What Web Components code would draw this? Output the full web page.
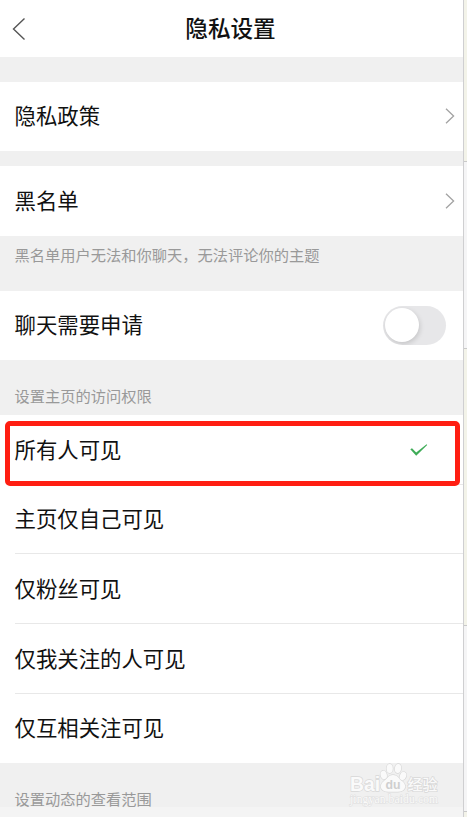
<!DOCTYPE html>
<html lang="zh-CN">
<head>
<meta charset="utf-8">
<title>隐私设置</title>
<style>
  body {
    margin: 0;
    background: #f4f4f4;
    font-family: "Noto Sans CJK SC", sans-serif;
    color: #111;
  }
</style>
</head>
<body>
<privacy-page>
  <nav-header>隐私设置</nav-header>
  <section-gap style="--height: 25px"></section-gap>
  <setting-row style="--height: 69px">隐私政策<arrow-icon slot="end"></arrow-icon></setting-row>
  <section-gap style="--height: 15px"></section-gap>
  <setting-row style="--height: 70px">黑名单<arrow-icon slot="end"></arrow-icon></setting-row>
  <section-gap style="--height: 55px; --top: 7px">黑名单用户无法和你聊天，无法评论你的主题</section-gap>
  <setting-row style="--height: 69px; --end: 17px">聊天需要申请<toggle-switch slot="end"></toggle-switch></setting-row>
  <section-gap style="--height: 55px; --top: 24px">设置主页的访问权限</section-gap>
  <option-list>
    <setting-row line style="--height: 70px; --end: 35px">所有人可见<check-icon slot="end"></check-icon></setting-row>
    <setting-row line style="--height: 69px">主页仅自己可见</setting-row>
    <setting-row line>仅粉丝可见</setting-row>
    <setting-row line>仅我关注的人可见</setting-row>
    <setting-row style="--height: 69px">仅互相关注可见</setting-row>
  </option-list>
  <section-gap style="--height: 44px; --top: 24px">设置动态的查看范围</section-gap>
  <side-strip slot="side"></side-strip>
  <water-mark slot="mark"></water-mark>
</privacy-page>

<script>
class PrivacyPage extends HTMLElement {
  constructor() {
    super();
    this.attachShadow({ mode: "open" });
    this.shadowRoot.innerHTML = /*html*/ `
            <style>
            :host {
              display: flex;
              position: relative;
              width: 467px;
              height: 817px;
              overflow: hidden;
            }

            main {
              flex: 1;
              min-width: 0;
            }
            </style>

            <main><slot></slot></main>
            <slot name="side"></slot>
            <slot name="mark"></slot>
        `;
  }
}

class NavHeader extends HTMLElement {
  constructor() {
    super();
    this.attachShadow({ mode: "open" });
    this.shadowRoot.innerHTML = /*html*/ `
            <style>
            :host {
              display: grid;
              grid-template-columns: 40px 1fr 42px;
              align-items: center;
              height: 57px;
              background: #fff;
              font-size: 22.6px;
              font-weight: 500;
              line-height: 55px;
              text-align: center;
            }

            svg {
              display: block;
              margin-left: 11px;
            }

            span {
              padding-bottom: 2px;
            }
            </style>

            <svg width="16" height="24" viewBox="0 0 16 24">
              <path d="M13.5 1.5 2.5 12l11 10.5" fill="none" stroke="#555" stroke-width="1.4" />
            </svg>
            <span><slot></slot></span>
        `;
  }
}

class SectionGap extends HTMLElement {
  constructor() {
    super();
    this.attachShadow({ mode: "open" });
    this.shadowRoot.innerHTML = /*html*/ `
            <style>
            :host {
              display: block;
              box-sizing: border-box;
              height: var(--height);
              padding: var(--top, 0) 0 0 14.5px;
              background: #f0f0f0;
              color: #999;
              font-size: 15.25px;
              line-height: 22px;
              white-space: nowrap;
            }
            </style>

            <slot></slot>
        `;
  }
}

class SettingRow extends HTMLElement {
  constructor() {
    super();
    this.attachShadow({ mode: "open" });
    this.shadowRoot.innerHTML = /*html*/ `
            <style>
            :host {
              display: block;
              height: var(--height, 70px);
              padding-left: 14.5px;
              background: #fff;
              font-size: 21.4px;
              line-height: 30px;
            }

            .row {
              display: flex;
              align-items: center;
              justify-content: space-between;
              box-sizing: border-box;
              height: 100%;
              padding-right: var(--end, 8px);
              border-bottom: 1px solid transparent;
            }

            :host([line]) .row {
              border-color: #e8e8e8;
            }

            span {
              padding-bottom: 1.5px;
            }
            </style>

            <div class="row">
              <span><slot></slot></span>
              <slot name="end"></slot>
            </div>
        `;
  }
}

class ArrowIcon extends HTMLElement {
  constructor() {
    super();
    this.attachShadow({ mode: "open" });
    this.shadowRoot.innerHTML = /*html*/ `
            <style>
            :host, svg {
              display: block;
            }
            </style>

            <svg width="10" height="16" viewBox="0 0 10 16">
              <path d="M1 .7 8.6 8 1 15.3" fill="none" stroke="#a3a3a3" stroke-width="1.3" />
            </svg>
        `;
  }
}

class CheckIcon extends HTMLElement {
  constructor() {
    super();
    this.attachShadow({ mode: "open" });
    this.shadowRoot.innerHTML = /*html*/ `
            <style>
            :host, svg {
              display: block;
            }
            </style>

            <svg width="18" height="12" viewBox="0 0 18 12">
              <path d="M.3 5.2 2 4.2l4.2 4.4L16.6.3l.6.7L6.2 11.7Z" fill="#3fac58" />
            </svg>
        `;
  }
}

class ToggleSwitch extends HTMLElement {
  constructor() {
    super();
    this.attachShadow({ mode: "open" });
    this.shadowRoot.innerHTML = /*html*/ `
            <style>
            :host {
              display: block;
              box-sizing: border-box;
              width: 63px;
              height: 39px;
              padding: 2px;
              border-radius: 20px;
              background: #e7e7e9;
              overflow: hidden;
            }

            .knob {
              width: 34px;
              height: 34px;
              border-radius: 50%;
              background: #fff;
              box-shadow: 1px 2px 5px rgba(0,0,0,0.15);
            }
            </style>

            <div class="knob"></div>
        `;
  }
}

class OptionList extends HTMLElement {
  constructor() {
    super();
    this.attachShadow({ mode: "open" });
    this.shadowRoot.innerHTML = /*html*/ `
            <style>
            :host {
              display: block;
              position: relative;
            }

            /* red marker round the chosen option */
            .marker {
              position: absolute;
              top: 6px;
              left: 5px;
              box-sizing: border-box;
              width: 455px;
              height: 65px;
              border: 5px solid #ff1e12;
              border-radius: 5px;
            }
            </style>

            <slot></slot>
            <div class="marker"></div>
        `;
  }
}

class SideStrip extends HTMLElement {
  constructor() {
    super();
    this.attachShadow({ mode: "open" });
    this.shadowRoot.innerHTML = /*html*/ `
            <style>
            :host {
              display: grid;
              grid-template-rows: 162px 187px 277px 186px 1fr;
              box-sizing: border-box;
              width: 4px;
              border-left: 1px solid #cfcfd1;
            }

            div {
              border-bottom: 1px solid #c9c9c9;
              background: #f5f5f6;
            }

            div:nth-of-type(odd) {
              background: #f3f3e9;
            }

            div:last-of-type {
              border: 0;
            }
            </style>

            <div></div><div></div><div></div><div></div><div></div>
        `;
  }
}

class WaterMark extends HTMLElement {
  constructor() {
    super();
    this.attachShadow({ mode: "open" });
    this.shadowRoot.innerHTML = /*html*/ `
            <style>
            :host {
              position: absolute;
              left: 348px;
              top: 762px;
            }

            svg {
              display: block;
            }

            text, .paw {
              fill: #fafafa;
              stroke: #d8d8d8;
              stroke-width: 1.4px;
              paint-order: stroke;
            }
            </style>

            <svg width="94" height="46" viewBox="0 0 94 46">
              <g font-family="Liberation Sans, sans-serif" font-weight="700">
                <text x="2" y="28.5" font-size="20.5" textLength="30" lengthAdjust="spacingAndGlyphs">Bai</text>
                <g class="paw">
                  <path d="M45 13c4 0 5.5 3 8.500 5.500 4 3 4.500 6.500 2.500 9-2 2.500-6 2.300-11 2.300s-9 .2-11-2.300c-2-2.500-1.500-6 2.500-9C39.500 16 41 13 45 13Z" />
                  <ellipse cx="35.700" cy="13" rx="3.100" ry="4.200" transform="rotate(-15 35.700 13)" />
                  <ellipse cx="41.700" cy="6.500" rx="3.100" ry="4.500" />
                  <ellipse cx="50" cy="6.500" rx="3.100" ry="4.500" transform="rotate(8 50 6.500)" />
                  <ellipse cx="55" cy="14" rx="3.100" ry="4.200" transform="rotate(20 55 14)" />
                </g>
                <text x="37.500" y="27" font-size="13" textLength="15" lengthAdjust="spacingAndGlyphs" style="fill: #cfcfcf; stroke: none">du</text>
              </g>
              <text x="59.500" y="27.500" font-family="Noto Sans CJK SC, sans-serif" font-size="15" font-weight="500">经验</text>
              <text x="2" y="41" font-family="Liberation Serif, serif" font-size="11.500" textLength="88" style="fill: #fafafa; stroke: #dedede; stroke-width: 1px">jingyan.baidu.com</text>
            </svg>
        `;
  }
}

customElements.define("privacy-page", PrivacyPage);
customElements.define("nav-header", NavHeader);
customElements.define("section-gap", SectionGap);
customElements.define("setting-row", SettingRow);
customElements.define("arrow-icon", ArrowIcon);
customElements.define("check-icon", CheckIcon);
customElements.define("toggle-switch", ToggleSwitch);
customElements.define("option-list", OptionList);
customElements.define("side-strip", SideStrip);
customElements.define("water-mark", WaterMark);
</script>
</body>
</html>
